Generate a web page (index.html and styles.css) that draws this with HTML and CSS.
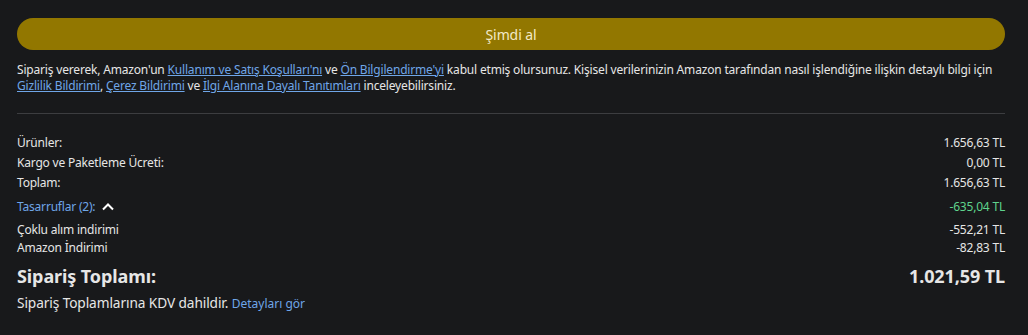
FILE: index.html
```html
<!DOCTYPE html>
<html lang="tr">
<head>
<meta charset="utf-8">
<link rel="stylesheet" href="styles.css">
</head>
<body>
<div class="page">
  <button class="buy">Şimdi al</button>
  <p class="legal">Sipariş vererek, Amazon'un <a href="#">Kullanım ve Satış Koşulları'nı</a> ve <a href="#">Ön Bilgilendirme'yi</a> kabul etmiş olursunuz. Kişisel verilerinizin Amazon tarafından nasıl işlendiğine ilişkin detaylı bilgi için <a href="#">Gizlilik Bildirimi</a>, <a href="#">Çerez Bildirimi</a> ve <a href="#">İlgi Alanına Dayalı Tanıtımları</a> inceleyebilirsiniz.</p>
  <hr class="divider">
  <div class="summary">
    <div class="row r1"><span>Ürünler:</span><span>1.656,63 TL</span></div>
    <div class="row r2"><span>Kargo ve Paketleme Ücreti:</span><span>0,00 TL</span></div>
    <div class="row r3"><span>Toplam:</span><span>1.656,63 TL</span></div>
    <div class="row r4 savings"><span class="sav-label">Tasarruflar (2): <svg class="chev" width="14" height="9" viewBox="0 0 14 9"><path d="M2 7.5 L7 2.5 L12 7.5" fill="none" stroke="#ffffff" stroke-width="2"/></svg></span><span class="green">-635,04 TL</span></div>
    <div class="row r5"><span>Çoklu alım indirimi</span><span>-552,21 TL</span></div>
    <div class="row r6"><span>Amazon İndirimi</span><span>-82,83 TL</span></div>
    <div class="row total"><span>Sipariş Toplamı:</span><span>1.021,59 TL</span></div>
    <p class="vat">Sipariş Toplamlarına KDV dahildir. <a href="#">Detayları gör</a></p>
  </div>
</div>
</body>
</html>
```

FILE: styles.css
```css
html, body {
  margin: 0;
  padding: 0;
  background: #18191b;
}
body {
  font-family: "Noto Sans", "Open Sans", sans-serif;
  color: #e6e6e6;
  font-size: 12px;
  letter-spacing: -0.2px;
}
.page {
  width: 988px;
  padding: 18px 0 0 17px;
}
.buy {
  display: block;
  width: 100%;
  height: 32px;
  border: none;
  border-radius: 16px;
  background: #927700;
  color: #f2e9c6;
  font-family: inherit;
  font-size: 14px;
  letter-spacing: -0.1px;
  padding: 0;
}
.legal {
  margin: 12px 0 0;
  line-height: 16px;
  font-size: 12px;
  letter-spacing: -0.18px;
}
a {
  color: #6fa6e8;
  text-decoration: underline;
}
.divider {
  margin: 19px 0 0;
  border: none;
  height: 1px;
  background: #3c3d40;
}
.summary {
  padding-top: 20px;
}
.row {
  display: flex;
  justify-content: space-between;
  align-items: center;
  line-height: 17px;
}
.r2 { margin-top: 3px; }
.r3 { margin-top: 3px; }
.r4 { margin-top: 7px; }
.r5 { margin-top: 6px; }
.r6 { margin-top: 1px; }
.sav-label {
  color: #6fa6e8;
  display: flex;
  align-items: center;
  gap: 6px;
}
.green {
  color: #5fd38c;
}
.total {
  margin-top: 8px;
  font-size: 18px;
  font-weight: 700;
  line-height: 25px;
  letter-spacing: -0.1px;
}
.vat {
  margin: 4px 0 0;
  font-size: 13.7px;
  line-height: 20px;
  letter-spacing: -0.1px;
}
.vat a {
  text-decoration: none;
  font-size: 12px;
  letter-spacing: 0;
}
```
